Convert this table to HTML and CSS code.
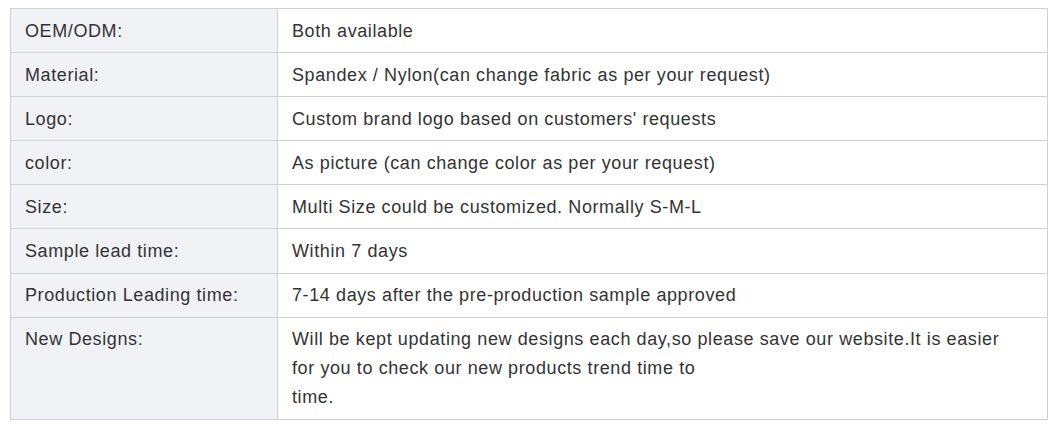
FILE: index.html
```html
<!DOCTYPE html>
<html>
<head>
<meta charset="utf-8">
<link rel="stylesheet" href="styles.css">
</head>
<body>
<table class="spec">
  <tr><td class="k">OEM/ODM:</td><td class="v">Both available</td></tr>
  <tr><td class="k">Material:</td><td class="v">Spandex / Nylon(can change fabric as per your request)</td></tr>
  <tr><td class="k">Logo:</td><td class="v">Custom brand logo based on customers' requests</td></tr>
  <tr><td class="k">color:</td><td class="v">As picture (can change color as per your request)</td></tr>
  <tr><td class="k">Size:</td><td class="v">Multi Size could be customized. Normally S-M-L</td></tr>
  <tr><td class="k">Sample lead time:</td><td class="v">Within 7 days</td></tr>
  <tr><td class="k">Production Leading time:</td><td class="v">7-14 days after the pre-production sample approved</td></tr>
  <tr><td class="k">New Designs:</td><td class="v">Will be kept updating new designs each day,so please save our website.It is easier<br>for you to check our new products trend time to<br>time.</td></tr>
</table>
</body>
</html>
```
FILE: styles.css
```css
html, body { background: #fff; }
body {
  margin: 8px 10px;
  font-family: "Liberation Sans", Arial, sans-serif;
  font-size: 18px;
  letter-spacing: 0.6px;
  color: #333;
}
.spec {
  width: 1038px;
  border-collapse: collapse;
  table-layout: fixed;
}
.spec td {
  border: 1px solid #d0d0d0;
  padding: 7.5px 14px 6.6px;
  line-height: 29px;
  vertical-align: top;
}
.spec .k {
  width: 238px;
  background: #f1f2f6;
}
.spec .v { background: #fff; }
```
